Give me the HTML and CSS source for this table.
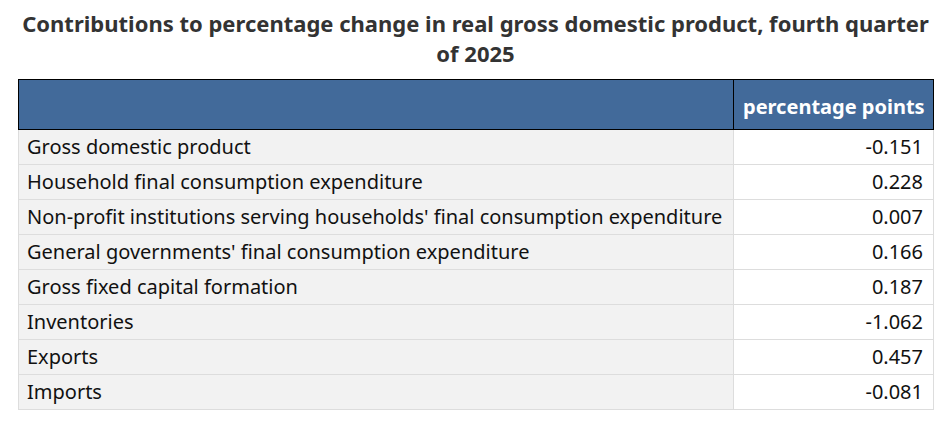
FILE: index.html
```html
<!DOCTYPE html>
<html>
<head>
<meta charset="utf-8">
<link rel="stylesheet" href="styles.css">
</head>
<body>
<div class="wrap">
<h1 class="title">Contributions to percentage change in real gross domestic product, fourth quarter of 2025</h1>
<table class="data">
<colgroup><col class="c-lab"><col class="c-val"></colgroup>
<thead>
<tr><th class="lab"></th><th class="val">percentage points</th></tr>
</thead>
<tbody>
<tr><td class="lab">Gross domestic product</td><td class="val">-0.151</td></tr>
<tr><td class="lab">Household final consumption expenditure</td><td class="val">0.228</td></tr>
<tr><td class="lab">Non-profit institutions serving households' final consumption expenditure</td><td class="val">0.007</td></tr>
<tr><td class="lab">General governments' final consumption expenditure</td><td class="val">0.166</td></tr>
<tr><td class="lab">Gross fixed capital formation</td><td class="val">0.187</td></tr>
<tr><td class="lab">Inventories</td><td class="val">-1.062</td></tr>
<tr><td class="lab">Exports</td><td class="val">0.457</td></tr>
<tr><td class="lab">Imports</td><td class="val">-0.081</td></tr>
</tbody>
</table>
</div>
</body>
</html>
```
FILE: styles.css
```css
html, body { margin: 0; padding: 0; background: #fff; }
body { font-family: "Noto Sans", "Open Sans", sans-serif; color: #111; }
.wrap { padding: 8px 18px 0 18px; }
.title {
  margin: 0 0 11px 0;
  font-size: 22px;
  line-height: 30px;
  font-weight: 700;
  text-align: center;
  color: #333;
}
.data {
  width: 915px;
  border-collapse: collapse;
  table-layout: fixed;
  font-size: 20px;
}
.c-lab { width: 715px; }
.c-val { width: 200px; }
.data th {
  background: #426a9a;
  color: #fff;
  border: 1px solid #000;
  height: 45px;
  vertical-align: middle;
  padding: 4px 9px 0 9px;
  text-align: right;
  font-weight: 700;
  font-size: 20px;
  line-height: 26px;
  white-space: nowrap;
}
.data td {
  border: 1px solid #ddd;
  height: 34px;
  padding: 0 8px;
  line-height: 26px;
  white-space: nowrap;
}
.data td.lab { background: #f2f2f2; text-align: left; }
.data td.val { background: #fff; text-align: right; padding-right: 10px; }
```
